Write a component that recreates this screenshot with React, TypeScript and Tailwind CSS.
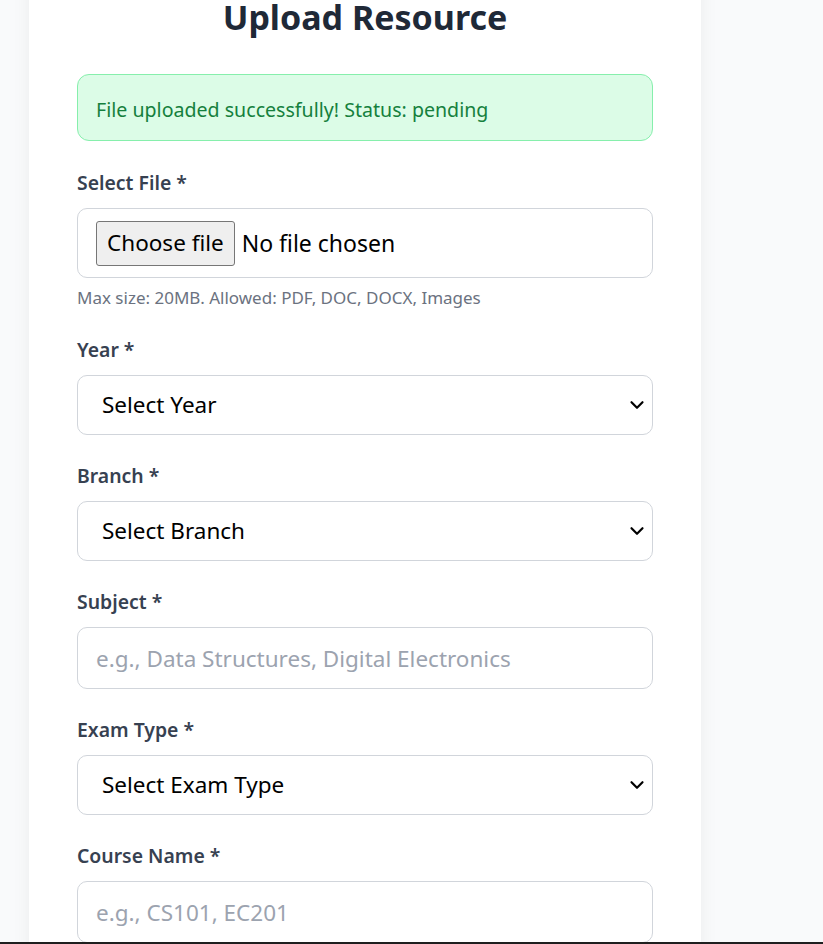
import { ChevronDown } from "lucide-react";

const YEARS = ["1st Year", "2nd Year", "3rd Year", "4th Year"];
const BRANCHES = ["CSE", "ECE", "EEE", "ME", "CE"];
const EXAM_TYPES = ["Mid Semester", "End Semester", "Quiz"];

const labelCls = "block text-[19.4px] leading-[26px] font-semibold text-[#374151] mb-3";
const boxCls =
  "w-full bg-white border border-[#d1d5db] rounded-[10px] text-[22.5px] text-black focus:outline-none";

function SelectField({ label, placeholder, options }: { label: string; placeholder: string; options: string[] }) {
  return (
    <div>
      <label className={labelCls}>{label}</label>
      <div className="relative">
        <select defaultValue="" className={`${boxCls} appearance-none h-[60px] pl-[24px] pr-10`}>
          <option value="">{placeholder}</option>
          {options.map((o) => (
            <option key={o} value={o}>{o}</option>
          ))}
        </select>
        <ChevronDown
          className="absolute right-[5px] top-1/2 -translate-y-1/2 w-[22px] h-[22px] text-black pointer-events-none"
          strokeWidth={2.4}
        />
      </div>
    </div>
  );
}

function TextField({ label, placeholder }: { label: string; placeholder: string }) {
  return (
    <div>
      <label className={labelCls}>{label}</label>
      <input
        type="text"
        placeholder={placeholder}
        className={`${boxCls} h-[62px] px-[18px] text-[22.3px] placeholder:text-[#9ca3af]`}
      />
    </div>
  );
}

export default function App() {
  return (
    <div className="min-h-screen bg-[#f9fafb] overflow-hidden" style={{ fontFamily: '"Noto Sans", "Open Sans", sans-serif' }}>
      <div className="ml-[29px] w-[672px] -mt-[51px] bg-white shadow-[0_0_18px_rgba(0,0,0,0.06)] px-12 pt-12 pb-12">
        <h1 className="text-[34px] leading-[40px] font-bold text-[#1f2937] text-center mb-[37px]">
          Upload Resource
        </h1>

        <div className="bg-[#dcfce7] border border-[#86efac] rounded-[12px] px-[18px] pt-[21px] pb-[17px] mb-[29px]">
          <p className="text-[19.6px] leading-[27px] text-[#15803d]">File uploaded successfully! Status: pending</p>
        </div>

        <form className="space-y-7">
          <div className="pb-px">
            <label className={labelCls}>Select File *</label>
            <div className="h-[70px] border border-[#d1d5db] rounded-[10px] flex items-center px-[18px] gap-[7px]">
              <button
                type="button"
                className="h-[45px] px-[10px] bg-[#efefef] border border-[#767676] rounded-[3px] text-[22.5px] text-black leading-none"
              >
                Choose file
              </button>
              <span className="text-[23px] text-black">No file chosen</span>
            </div>
            <p className="text-[17px] leading-[21px] text-[#6b7280] mt-[9px]">
              Max size: 20MB. Allowed: PDF, DOC, DOCX, Images
            </p>
          </div>

          <SelectField label="Year *" placeholder="Select Year" options={YEARS} />
          <SelectField label="Branch *" placeholder="Select Branch" options={BRANCHES} />
          <TextField label="Subject *" placeholder="e.g., Data Structures, Digital Electronics" />
          <SelectField label="Exam Type *" placeholder="Select Exam Type" options={EXAM_TYPES} />
          <TextField label="Course Name *" placeholder="e.g., CS101, EC201" />
        </form>
      </div>

      {/* window edge */}
      <div className="fixed bottom-0 left-0 right-0 h-[2px] bg-[#1f1f1f]" />
    </div>
  );
}
